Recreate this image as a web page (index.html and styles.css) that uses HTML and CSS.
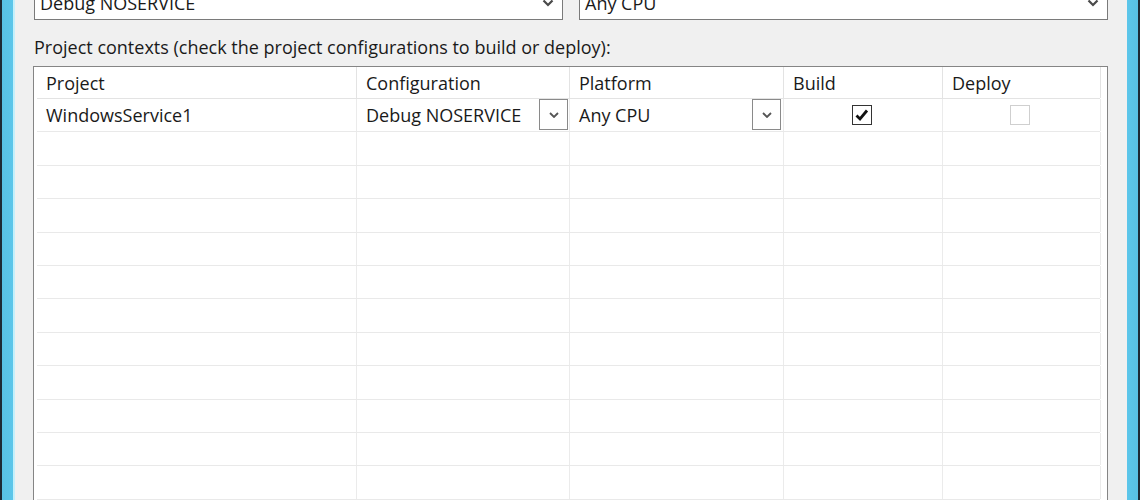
FILE: index.html
```html
<!DOCTYPE html>
<html>
<head>
<meta charset="utf-8">
<link rel="stylesheet" href="styles.css">
</head>
<body>
<div class="window">
  <div class="frame-left"></div>
  <div class="client">
    <div class="top-row">
      <div class="combo">
        <span class="combo-text">Debug NOSERVICE</span>
        <svg class="combo-chev" width="12" height="8" viewBox="0 0 12 8"><path d="M1.5 1.5 L6 6 L10.5 1.5" fill="none" stroke="#4a4a4a" stroke-width="2.2"/></svg>
      </div>
      <div class="combo">
        <span class="combo-text">Any CPU</span>
        <svg class="combo-chev" width="12" height="8" viewBox="0 0 12 8"><path d="M1.5 1.5 L6 6 L10.5 1.5" fill="none" stroke="#4a4a4a" stroke-width="2.2"/></svg>
      </div>
    </div>
    <div class="label">Project contexts (check the project configurations to build or deploy):</div>
    <div class="grid">
      <div class="row head">
        <div class="cell">Project</div>
        <div class="cell">Configuration</div>
        <div class="cell">Platform</div>
        <div class="cell">Build</div>
        <div class="cell">Deploy</div>
        <div class="cell tail"></div>
      </div>
      <div class="row">
        <div class="cell">WindowsService1</div>
        <div class="cell with-btn"><span>Debug NOSERVICE</span><span class="cell-btn cfg"><svg width="10" height="6" viewBox="0 0 10 6"><path d="M1 1 L5 5 L9 1" fill="none" stroke="#555" stroke-width="1.8"/></svg></span></div>
        <div class="cell with-btn"><span>Any CPU</span><span class="cell-btn plat"><svg width="10" height="6" viewBox="0 0 10 6"><path d="M1 1 L5 5 L9 1" fill="none" stroke="#555" stroke-width="1.8"/></svg></span></div>
        <div class="cell center"><span class="check on"><svg width="18" height="18" viewBox="0 0 18 18"><path d="M3.5 9.5 L7 13 L14 4.5" fill="none" stroke="#111" stroke-width="2.8"/></svg></span></div>
        <div class="cell center"><span class="check off"></span></div>
        <div class="cell tail"></div>
      </div>
      <div class="row"><div class="cell"></div><div class="cell"></div><div class="cell"></div><div class="cell"></div><div class="cell"></div><div class="cell tail"></div></div>
      <div class="row"><div class="cell"></div><div class="cell"></div><div class="cell"></div><div class="cell"></div><div class="cell"></div><div class="cell tail"></div></div>
      <div class="row"><div class="cell"></div><div class="cell"></div><div class="cell"></div><div class="cell"></div><div class="cell"></div><div class="cell tail"></div></div>
      <div class="row"><div class="cell"></div><div class="cell"></div><div class="cell"></div><div class="cell"></div><div class="cell"></div><div class="cell tail"></div></div>
      <div class="row"><div class="cell"></div><div class="cell"></div><div class="cell"></div><div class="cell"></div><div class="cell"></div><div class="cell tail"></div></div>
      <div class="row"><div class="cell"></div><div class="cell"></div><div class="cell"></div><div class="cell"></div><div class="cell"></div><div class="cell tail"></div></div>
      <div class="row"><div class="cell"></div><div class="cell"></div><div class="cell"></div><div class="cell"></div><div class="cell"></div><div class="cell tail"></div></div>
      <div class="row"><div class="cell"></div><div class="cell"></div><div class="cell"></div><div class="cell"></div><div class="cell"></div><div class="cell tail"></div></div>
      <div class="row"><div class="cell"></div><div class="cell"></div><div class="cell"></div><div class="cell"></div><div class="cell"></div><div class="cell tail"></div></div>
      <div class="row"><div class="cell"></div><div class="cell"></div><div class="cell"></div><div class="cell"></div><div class="cell"></div><div class="cell tail"></div></div>
      <div class="row"><div class="cell"></div><div class="cell"></div><div class="cell"></div><div class="cell"></div><div class="cell"></div><div class="cell tail"></div></div>
      <div class="row"><div class="cell"></div><div class="cell"></div><div class="cell"></div><div class="cell"></div><div class="cell"></div><div class="cell tail"></div></div>
    </div>
  </div>
  <div class="frame-right"></div>
</div>
</body>
</html>
```

FILE: styles.css
```css
html, body {
  margin: 0;
  padding: 0;
  width: 1140px;
  height: 500px;
  overflow: hidden;
  background: #f0f0f0;
}

body {
  font-family: "Open Sans", "Noto Sans", sans-serif;
  font-size: 18px;
  color: #1a1a1a;
}

.window {
  display: flex;
  width: 1140px;
  height: 500px;
  overflow: hidden;
}

.frame-left {
  width: 15px;
  flex: none;
  background: linear-gradient(to right, #1d2a36 0, #1d2a36 2px, #58c2e6 2px, #5cc6ea 13px, #c4f0fb 13px, #c4f0fb 15px);
}

.frame-right {
  width: 13px;
  flex: none;
  background: linear-gradient(to right, #5cc6ea 0, #58c0e4 11px, #1d2a36 11px, #1d2a36 13px);
}

.client {
  flex: 1;
  padding: 0 19px 0 18px;
  display: flex;
  flex-direction: column;
  min-width: 0;
  overflow: hidden;
}

.top-row {
  display: flex;
  gap: 16px;
  margin-top: -14px;
  padding-left: 1px;
}

.combo {
  flex: 1;
  height: 34px;
  box-sizing: border-box;
  border: 1px solid #7a7a7a;
  background: #fff;
  display: flex;
  align-items: center;
  justify-content: space-between;
  padding: 0 8px 0 5px;
}

.combo-chev {
  margin-top: -1px;
}

.label {
  margin-top: 17px;
  line-height: 20px;
  height: 20px;
  padding-left: 1px;
  white-space: nowrap;
}

.grid {
  margin-top: 9px;
  border: 1px solid #858585;
  border-bottom: none;
  background: #fff;
  padding: 0 7px 0 3px;
  flex: 1;
  overflow: hidden;
}

.row {
  display: grid;
  grid-template-columns: 320px 213px 214px 159px 158px 1fr;
  height: 33.4px;
  box-sizing: border-box;
  border-bottom: 1px solid #e9e9e9;
}

.row.head {
  height: 32px;
  border-bottom: 1px solid #e3e3e3;
}

.cell {
  border-right: 1px solid #ebebeb;
  display: flex;
  align-items: center;
  padding-left: 9px;
  min-width: 0;
  white-space: nowrap;
}

.head .cell {
  border-right-color: #e3e3e3;
}

.cell.tail {
  border-right: none;
  padding: 0;
}

.with-btn {
  justify-content: space-between;
  align-items: flex-start;
}

.with-btn > span:first-child {
  align-self: center;
}

.cell-btn {
  width: 29px;
  height: 31px;
  box-sizing: border-box;
  border: 1px solid #8a8a8a;
  background: #fff;
  display: flex;
  align-items: center;
  justify-content: center;
}

.cell-btn.cfg {
  margin-right: 1px;
}

.cell-btn.plat {
  margin-right: 2px;
}

.cell.center {
  justify-content: center;
  padding-left: 0;
}

.check {
  width: 20px;
  height: 20px;
  box-sizing: border-box;
  display: flex;
  align-items: center;
  justify-content: center;
  background: #fff;
}

.check.on {
  border: 1px solid #333;
  margin-left: -3px;
}

.check.off {
  border: 1px solid #cfcfcf;
  margin-left: -3px;
}
```
